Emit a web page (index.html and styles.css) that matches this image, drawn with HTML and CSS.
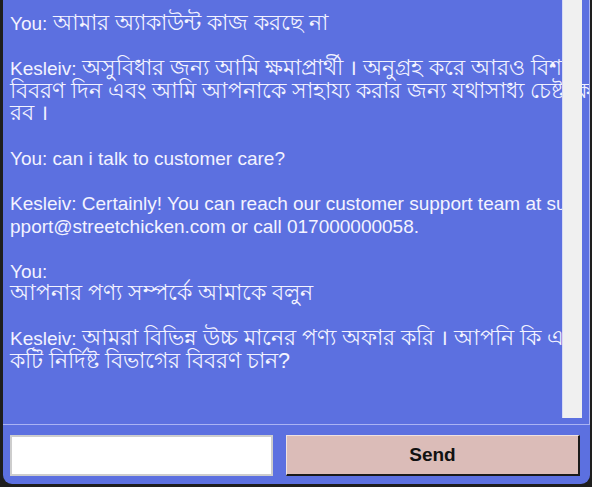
FILE: index.html
```html
<!DOCTYPE html>
<html lang="bn">
<head>
<meta charset="utf-8">
<title>Chat</title>
<link rel="stylesheet" href="styles.css">
</head>
<body>
<div class="window">
  <div class="chat">
    <div class="log">
      <p>You: <span class="bn">আমার অ্যাকাউন্ট কাজ করছে না</span></p>
      <p>Kesleiv: <span class="bn">অসুবিধার জন্য আমি ক্ষমাপ্রার্থী । অনুগ্রহ করে আরও বিশদ<br>বিবরণ দিন এবং আমি আপনাকে সাহায্য করার জন্য যথাসাধ্য চেষ্টা ক<br>রব ।</span></p>
      <p>You: can i talk to customer care?</p>
      <p>Kesleiv: Certainly! You can reach our customer support team at su<br>pport@streetchicken.com or call 017000000058.</p>
      <p>You:<br><span class="bn">আপনার পণ্য সম্পর্কে আমাকে বলুন</span></p>
      <p>Kesleiv: <span class="bn">আমরা বিভিন্ন উচ্চ মানের পণ্য অফার করি । আপনি কি এ<br>কটি নির্দিষ্ট বিভাগের বিবরণ চান?</span></p>
    </div>
    <div class="scrollbar"></div>
  </div>
  <div class="composer">
    <input class="field" type="text">
    <button class="send" type="button">Send</button>
  </div>
</div>
</body>
</html>
```
FILE: styles.css
```css
html, body {
  margin: 0;
  padding: 0;
  background: #1e1e1e;
  height: 487px;
  overflow: hidden;
}

.window {
  margin-left: 3px;
  width: 587px;
  height: 484px;
  background: #5c70e0;
  border-radius: 0 0 9px 9px;
  font-family: "Liberation Sans", Arial, "Noto Sans", sans-serif;
  box-sizing: border-box;
}

.chat {
  position: relative;
  height: 425px;
  width: 587px;
  box-sizing: border-box;
  border-right: 1px solid #aab3f3;
  border-bottom: 1px solid #aab3f3;
  overflow: hidden;
}

.log {
  padding: 13px 0 0 7px;
  color: #f3f3ff;
  font-size: 19px;
  line-height: 22.5px;
  white-space: nowrap;
}

.log p {
  margin: 0 0 22.5px 0;
}

.bn {
  font-size: 21.5px;
  line-height: 14px;
}

.scrollbar {
  position: absolute;
  top: 0;
  left: 559px;
  width: 20px;
  height: 418px;
  background: #f0f0f0;
  border-left: 1px solid #d6daf6;
  box-sizing: border-box;
}

.composer {
  display: flex;
  gap: 13px;
  padding: 10px 0 0 7px;
}

.field {
  width: 263px;
  height: 41px;
  box-sizing: border-box;
  margin: 0;
  border: 2px solid #cdcdcd;
  background: #ffffff;
  outline: none;
}

.send {
  width: 294px;
  height: 41px;
  box-sizing: border-box;
  margin: 0;
  padding: 0;
  background: #dbbcb8;
  border-top: 1px solid #efe2e0;
  border-left: 1px solid #efe2e0;
  border-right: 2px solid #1a1a1a;
  border-bottom: 2px solid #1a1a1a;
  font-family: "Liberation Sans", Arial, sans-serif;
  font-weight: bold;
  font-size: 19px;
  color: #111111;
}
```
